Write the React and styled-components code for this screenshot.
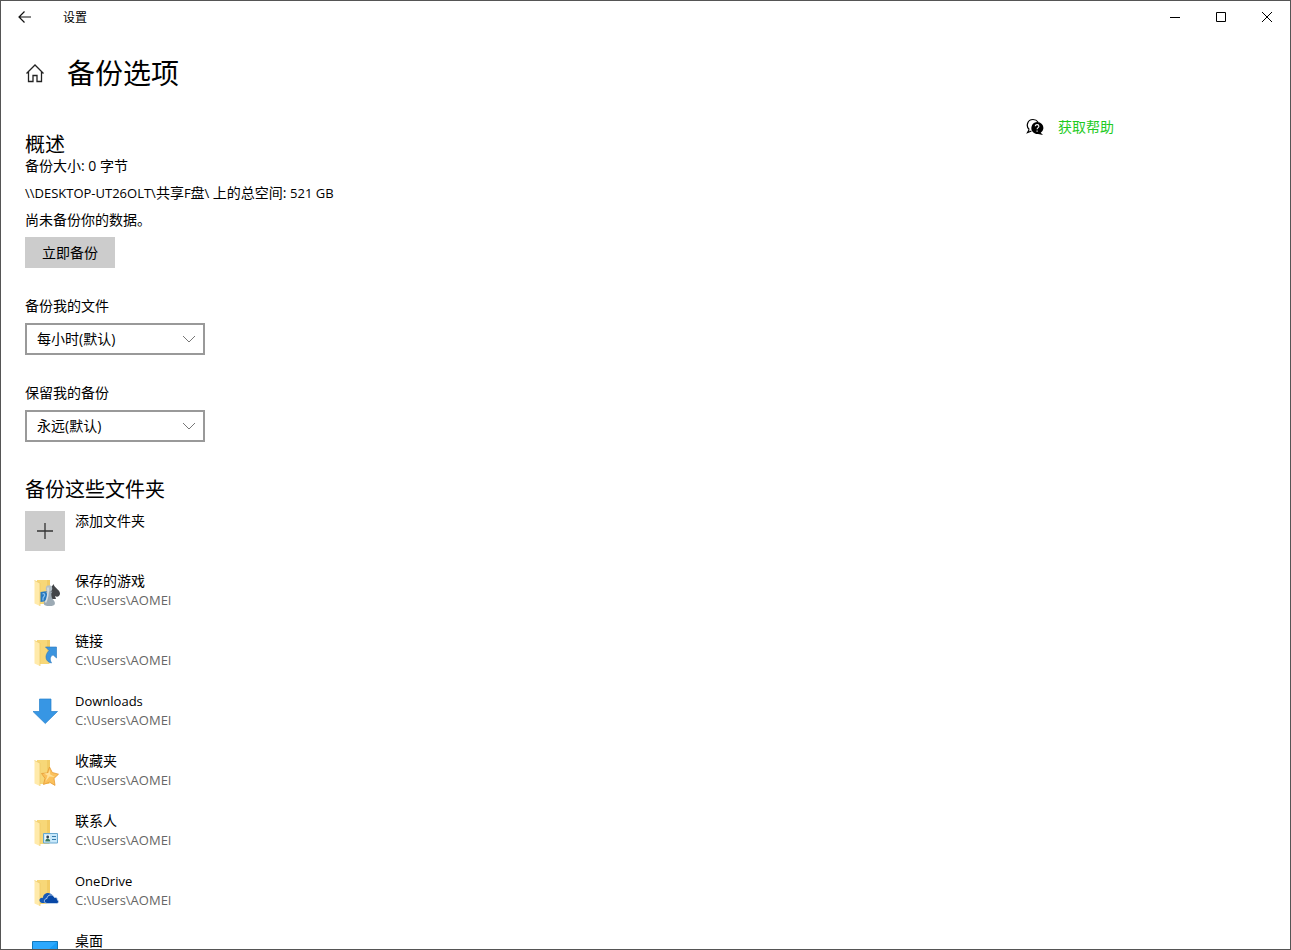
import React from "react";
import styled, { createGlobalStyle } from "styled-components";

const GlobalStyle = createGlobalStyle`
  *, *::before, *::after { box-sizing: border-box; }
  body {
    margin: 0;
    background: #fff;
    color: #000;
    font-family: "Open Sans", "Noto Sans CJK SC", sans-serif;
    font-size: 14px;
    line-height: 20px;
  }
  h1, h2, p, ul { margin: 0; padding: 0; font-weight: 400; }
  button, select { font: inherit; color: inherit; }
`;

const Window = styled.div`
  display: flex;
  flex-direction: column;
  height: 100vh;
  overflow: hidden;
  border: 1px solid #555;
  background: #fff;
`;

const TitleBar = styled.header`
  display: flex;
  flex: none;
  align-items: center;
  height: 32px;
  font-size: 12px;
`;

const WindowButton = styled.button`
  display: grid;
  place-items: center;
  width: ${(p) => (p.$wide ? 48 : 46)}px;
  height: 32px;
  padding: 0;
  border: 0;
  background: transparent;
`;

const WindowTitle = styled.span`
  flex: 1;
  padding: 2px 0 0 14px;
`;

const PageHeader = styled.div`
  display: flex;
  flex: none;
  align-items: center;
  gap: 22px;
  height: 82px;
  padding: 0 24px 2px;
`;

const HomeButton = styled.button`
  display: grid;
  padding: 0;
  border: 0;
  background: transparent;
`;

const PageTitle = styled.h1`
  font-size: 28px;
  line-height: 40px;
`;

const Content = styled.div`
  display: flex;
  flex: 1;
  min-height: 0;
`;

const Main = styled.main`
  flex: 1;
  min-width: 0;
  padding: 19px 24px 0;
`;

const Help = styled.aside`
  flex: none;
  width: 264px;
`;

const HelpLink = styled.a`
  display: flex;
  align-items: center;
  gap: 14px;
  height: 24px;
  color: #1fcb1f;
  text-decoration: none;
`;

const SectionTitle = styled.h2`
  font-size: 20px;
  line-height: 22px;
`;

const Overview = styled.section`
  display: flex;
  flex-direction: column;
  align-items: flex-start;
`;

const Facts = styled.div`
  display: grid;
  gap: 7px;
  margin-bottom: 7px;
`;

const Latin = styled.span`
  font-size: 13px;
`;

const BackupButton = styled.button`
  width: 90px;
  height: 31px;
  padding: 0;
  border: 0;
  background: #ccc;
`;

const Field = styled.div`
  display: grid;
  gap: 7px;
  width: 180px;
  margin-top: 28px;
`;

const SelectBox = styled.div`
  position: relative;
  display: grid;

  svg {
    position: absolute;
    top: 11px;
    right: 9px;
    pointer-events: none;
  }
`;

const Select = styled.select`
  appearance: none;
  height: 32px;
  padding: 0 30px 0 10px;
  border: 2px solid #999;
  border-radius: 0;
  background: #fff;
`;

const Folders = styled.section`
  margin-top: 37px;
`;

const FolderList = styled.ul`
  display: grid;
  gap: 20px;
  margin-top: 10px;
  list-style: none;
`;

const FolderRow = styled.li`
  display: flex;
  gap: 10px;
  height: 40px;

  > svg { flex: none; }
`;

const AddButton = styled.button`
  display: flex;
  gap: 10px;
  padding: 0;
  border: 0;
  background: transparent;
`;

const AddTile = styled.span`
  display: grid;
  place-items: center;
  width: 40px;
  height: 40px;
  background: #ccc;
`;

const FolderPath = styled.p`
  color: #666;
  font-size: 13px;
  line-height: 18px;
`;

function FolderBase() {
  return (
    <>
      <path d="M12 9h12.500v24H12z" fill="#f7d778" />
      <path d="M22 9h3v13h-3z" fill="#f2cc66" />
      <path d="M9.500 9.500 15 12v23l-5.500-2.500z" fill="#ffeaaa" />
      <path d="M9.500 9.500 15 12v23" fill="none" stroke="#edc966" strokeWidth=".7" />
    </>
  );
}

const drawings = {
  games: (
    <>
      <FolderBase />
      <path d="M15.500 21l7-1v10l-7 1z" fill="#2879bf" />
      <path d="M17.500 23c2-1 3 1 1.500 2.500s-1 2-1 4" fill="none" stroke="#8dc4ed" strokeWidth="1.200" />
      <path d="M28.500 13c1 4 6.500 6 6.500 9.500 0 3-3 4-5 2.500l1 3h-5l-1-11c1.500-1.500 3-2.500 3.500-4z" fill="#434548" />
      <circle cx="24" cy="17.500" r="3.200" fill="#b4c0c8" />
      <path d="M20.500 20.500h7l-1.200 2c0 3 .5 5 2.500 7 1.500 1.500 1.500 4 0 4.700-2.500 1.200-6 1.200-9 0-1.500-.7-1.200-3 0-4.200 2.500-2.500 2.700-4.500 2-7.500z" fill="#9caab4" />
      <path d="M23 16.500c.5 7-.5 11-2.500 15" fill="none" stroke="#d9e1e5" strokeWidth="1.500" />
    </>
  ),
  links: (
    <>
      <FolderBase />
      <path d="M20.500 16h11v11l-3.500-3.200c-3 2-3.500 4.200-1.500 8.200-6-1-7.500-7.500-2.500-12.500z" fill="#3b94de" stroke="#2877bd" strokeWidth=".6" />
    </>
  ),
  downloads: (
    <path d="M14.500 8h11.500v12.500h6.500L20.250 32.500 8 20.500h6.500z" fill="#3796e4" stroke="#2581cd" strokeWidth=".7" />
  ),
  favorites: (
    <>
      <FolderBase />
      <path d="M24.500 16l2.800 5.500 6.200 1.700-4.500 4.200 1 7-5.500-3.200-6 2.300 1.500-6.200-3.500-4.800 5.800-.5z" fill="#fbc15b" stroke="#e69b35" strokeWidth=".8" />
      <path d="M24.500 18.500l.8 5 4.700 2.500-5.500-.5-4 5 2-6-3.500-2 4.500-.5z" fill="#ffe199" />
    </>
  ),
  contacts: (
    <>
      <FolderBase />
      <path d="M18.500 22.500h14v9.500h-14z" fill="#c7e8fb" stroke="#68a7ce" />
      <path d="M20 24h5v7h-5z" fill="#eef8fc" />
      <circle cx="22.700" cy="26" r="1.400" fill="#345" />
      <path d="M20.200 30.500c0-4 5-4 5 0z" fill="#367b62" />
      <path d="M27 25.500h4M27 28.500h4" stroke="#397ba9" />
    </>
  ),
  onedrive: (
    <>
      <FolderBase />
      <path d="M17 32c-4-1-3-6 1-5 0-5 7-7 10-2l-5 7z" fill="#1659b7" />
      <path d="M22 32.500c-4-.5-3-5 0-5 0-4 6-5 7.500-1 3-.5 3 2 2.800 2.500 2 .5 1.500 3.500-.5 3.500z" fill="#0747a6" stroke="#cfdef0" strokeWidth=".8" />
    </>
  ),
  desktop: (
    <>
      <path d="M7.500 10.500h25v19h-25z" fill="#199cf5" stroke="#1179bd" />
      <path d="M8 11h24L12 29H8z" fill="#2ca9ff" />
    </>
  ),
};

const userPath = "C:\\Users\\AOMEI";

const folders = [
  { name: "保存的游戏", icon: "games", path: userPath },
  { name: "链接", icon: "links", path: userPath },
  { name: <Latin>Downloads</Latin>, icon: "downloads", path: userPath },
  { name: "收藏夹", icon: "favorites", path: userPath },
  { name: "联系人", icon: "contacts", path: userPath },
  { name: <Latin>OneDrive</Latin>, icon: "onedrive", path: userPath },
  { name: "桌面", icon: "desktop" },
];

function Dropdown({ id, label, value }) {
  return (
    <Field>
      <label htmlFor={id}>{label}</label>
      <SelectBox>
        <Select id={id} defaultValue={value}>
          <option>{value}</option>
        </Select>
        <svg width="14" height="10" viewBox="0 0 14 10" fill="none" stroke="#777" aria-hidden="true">
          <path d="M1 2l6 6 6-6" />
        </svg>
      </SelectBox>
    </Field>
  );
}

export default function App() {
  return (
    <Window>
      <GlobalStyle />
      <TitleBar>
        <WindowButton $wide aria-label="返回">
          <svg width="14" height="12" viewBox="0 0 14 12" fill="none" stroke="#111" strokeWidth="1.200">
            <path d="M1 6h12M6.500.5 1 6l5.500 5.500" />
          </svg>
        </WindowButton>
        <WindowTitle>设置</WindowTitle>
        <WindowButton aria-label="最小化">
          <svg width="10" height="10" stroke="#000"><path d="M0 5.500h10" /></svg>
        </WindowButton>
        <WindowButton aria-label="最大化">
          <svg width="10" height="10" fill="none" stroke="#000"><path d="M.5.500h9v9h-9z" /></svg>
        </WindowButton>
        <WindowButton aria-label="关闭">
          <svg width="10" height="10" viewBox="0 0 10 10" stroke="#000"><path d="M0 0l10 10M10 0 0 10" /></svg>
        </WindowButton>
      </TitleBar>

      <PageHeader>
        <HomeButton aria-label="主页">
          <svg width="20" height="20" viewBox="0 0 20 20" fill="none" stroke="#222" strokeWidth="1.300">
            <path d="M1.500 10.500 10 2l8.500 8.500M3.500 9v9.500h4.500v-6h4v6h4.500V9" />
          </svg>
        </HomeButton>
        <PageTitle>备份选项</PageTitle>
      </PageHeader>

      <Content>
        <Main>
          <Overview>
            <SectionTitle>概述</SectionTitle>
            <Facts>
              <p>备份大小: 0 字节</p>
              <p>
                <Latin>{"\\\\DESKTOP-UT26OLT\\"}</Latin>共享<Latin>F</Latin>盘
                <Latin>{"\\ "}</Latin>上的总空间: <Latin>521 GB</Latin>
              </p>
              <p>尚未备份你的数据。</p>
            </Facts>
            <BackupButton>立即备份</BackupButton>
          </Overview>

          <Dropdown id="frequency" label="备份我的文件" value="每小时(默认)" />
          <Dropdown id="retention" label="保留我的备份" value="永远(默认)" />

          <Folders>
            <SectionTitle>备份这些文件夹</SectionTitle>
            <FolderList>
              <FolderRow>
                <AddButton>
                  <AddTile>
                    <svg width="16" height="16" viewBox="0 0 16 16" stroke="#333" strokeWidth="1.300">
                      <path d="M0 8h16M8 0v16" />
                    </svg>
                  </AddTile>
                  添加文件夹
                </AddButton>
              </FolderRow>
              {folders.map((folder) => (
                <FolderRow key={folder.icon}>
                  <svg width="40" height="40" viewBox="0 0 40 40" aria-hidden="true">
                    {drawings[folder.icon]}
                  </svg>
                  <div>
                    <p>{folder.name}</p>
                    {folder.path && <FolderPath>{folder.path}</FolderPath>}
                  </div>
                </FolderRow>
              ))}
            </FolderList>
          </Folders>
        </Main>

        <Help>
          <HelpLink href="#help">
            <svg width="18" height="18" viewBox="0 0 18 18" aria-hidden="true">
              <path d="M3.200 11.500C-.5 8 1.500 1.500 7 1.500c2.500 0 4 1 5 2.500M3.200 11.500 1.500 14.500l4-1.500" fill="none" stroke="#000" strokeWidth="1.200" />
              <path d="M11 4a6 6 0 1 1-2 11.500A6 6 0 0 1 11 4zM14 14l3 3-5-1z" fill="#000" />
              <path d="M9.300 8.300c0-2.300 3.600-2.200 3.600 0 0 1.400-1.800 1.300-1.800 3M11.100 12.400v1.300" fill="none" stroke="#fff" strokeWidth="1.100" />
            </svg>
            获取帮助
          </HelpLink>
        </Help>
      </Content>
    </Window>
  );
}
